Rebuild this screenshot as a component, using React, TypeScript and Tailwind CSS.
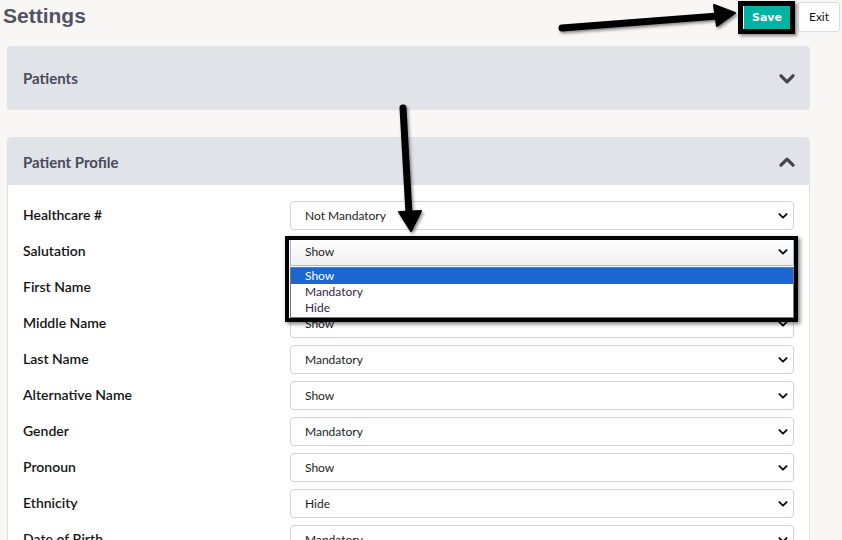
import React from "react";

const Chevron = ({ up = false, className = "" }: { up?: boolean; className?: string }) => (
  <svg viewBox="0 0 16 10" className={className} fill="none" stroke="currentColor" strokeWidth={3.2} strokeLinecap="round" strokeLinejoin="round">
    {up ? <path d="M2 8.2 L8 2.2 L14 8.2" /> : <path d="M2 1.8 L8 7.8 L14 1.8" />}
  </svg>
);

const rows: [string, string][] = [
  ["Healthcare #", "Not Mandatory"],
  ["Salutation", "Show"],
  ["First Name", "Show"],
  ["Middle Name", "Show"],
  ["Last Name", "Mandatory"],
  ["Alternative Name", "Show"],
  ["Gender", "Mandatory"],
  ["Pronoun", "Show"],
  ["Ethnicity", "Hide"],
  ["Date of Birth", "Mandatory"],
];

function SelectBox({ value, open = false }: { value: string; open?: boolean }) {
  return (
    <div
      className={
        "relative mt-[1px] flex h-[29px] flex-1 items-center rounded-[4px] border pl-[14px] pr-[5px] text-[12px] text-[#222] " +
        (open
          ? "border-[#9bb9de] bg-gradient-to-b from-white to-[#f0f0f0] rounded-b-none"
          : "border-[#d2d2d2] bg-white")
      }
    >
      <span className="flex-1 pt-[1px]">{value}</span>
      <Chevron className="h-[6px] w-[10px] text-[#111]" />
      {open && (
        <>
          <div className="absolute left-[-1px] right-[-1px] top-[29px] z-10 flex flex-col border border-[#767676] bg-white pb-[1px] text-[12px] leading-[16px]">
            <div className="bg-[#1a67d2] pl-[14px] text-white">Show</div>
            <div className="pl-[14px] text-[#3a1a4e]">Mandatory</div>
            <div className="pl-[14px] text-[#3a1a4e]">Hide</div>
          </div>
          <div className="pointer-events-none absolute left-[-6px] right-[-5px] top-[-2px] z-20 h-[86px] border-[4px] border-black shadow-[2px_2px_4px_rgba(0,0,0,0.5)]" />
        </>
      )}
    </div>
  );
}

export default function App() {
  return (
    <div className="relative h-[540px] w-[842px] overflow-hidden bg-[#f8f7f6] font-['Lato',sans-serif]">
      {/* header */}
      <div className="flex h-[46px] items-start justify-between">
        <h1 className="pl-[3px] pt-[4px] font-['Liberation_Sans',Arial,sans-serif] text-[21px] font-bold leading-[24px] text-[#525262]">
          Settings
        </h1>
        <div className="mr-[2px] flex items-start gap-[8px]">
          <div className="relative mt-[6px]">
            <button className="flex h-[23px] w-[46px] items-center justify-center bg-[#00b2a4] pt-[1px] font-['DejaVu_Sans',sans-serif] text-[11px] font-bold text-white">
              Save
            </button>
            <div className="pointer-events-none absolute left-[-6px] right-[-5px] top-[-5px] bottom-[-5px] border-[5px] border-black shadow-[2px_2px_3px_rgba(0,0,0,0.45)]" />
          </div>
          <button className="mt-[2px] flex h-[30px] w-[42px] items-center justify-center rounded-[3px] border border-[#dcdcdc] bg-white text-[12px] text-[#111]">
            Exit
          </button>
        </div>
      </div>

      {/* Patients panel */}
      <div className="ml-[7px] flex h-[63px] w-[803px] items-center justify-between rounded-[4px] bg-[#e0e3e8] pl-[16px] pr-[15px] pt-[2px] shadow-[0_1px_1px_rgba(0,0,0,0.08)]">
        <span className="text-[15px] font-bold text-[#4a4a5c]">Patients</span>
        <Chevron className="h-[10px] w-[16px] text-[#45454f]" />
      </div>

      {/* Patient profile panel */}
      <div className="ml-[7px] mt-[28px] w-[803px] overflow-visible rounded-t-[4px] border-x border-[#e3e3e3] bg-white">
        <div className="flex h-[48px] items-center justify-between rounded-t-[4px] bg-[#e0e3e8] pl-[15px] pr-[14px] pt-[2px]">
          <span className="text-[15px] font-bold text-[#4a4a5c]">Patient Profile</span>
          <Chevron up className="h-[10px] w-[16px] text-[#45454f]" />
        </div>
        <div className="flex flex-col gap-[7px] pb-[20px] pt-[15px]">
          {rows.map(([label, value], i) => (
            <div key={label} className="flex h-[29px] items-center">
              <div className="w-[282px] pl-[15px] text-[14px] font-semibold text-[#141414]">{label}</div>
              <div className="mr-[15px] flex flex-1 self-start">
                <SelectBox value={value} open={i === 1} />
              </div>
            </div>
          ))}
        </div>
      </div>

      {/* annotation arrows */}
      <svg className="pointer-events-none absolute left-0 top-0 z-30" width="842" height="540" viewBox="0 0 842 540">
        <defs>
          <filter id="sh" x="-20%" y="-20%" width="140%" height="140%">
            <feDropShadow dx="1.5" dy="2" stdDeviation="1.5" floodColor="#000" floodOpacity="0.45" />
          </filter>
        </defs>
        <g filter="url(#sh)">
          <path d="M562 28 L718 16" stroke="#000" strokeWidth="7" strokeLinecap="round" />
          <path d="M714 5 L735 13 L717 26 Z" fill="#000" stroke="#000" strokeWidth="2" strokeLinejoin="round" />
          <path d="M403 108 L409 214" stroke="#000" strokeWidth="7" strokeLinecap="round" />
          <path d="M399 212 L411 231 L421 211 Z" fill="#000" stroke="#000" strokeWidth="2" strokeLinejoin="round" />
        </g>
      </svg>
    </div>
  );
}
